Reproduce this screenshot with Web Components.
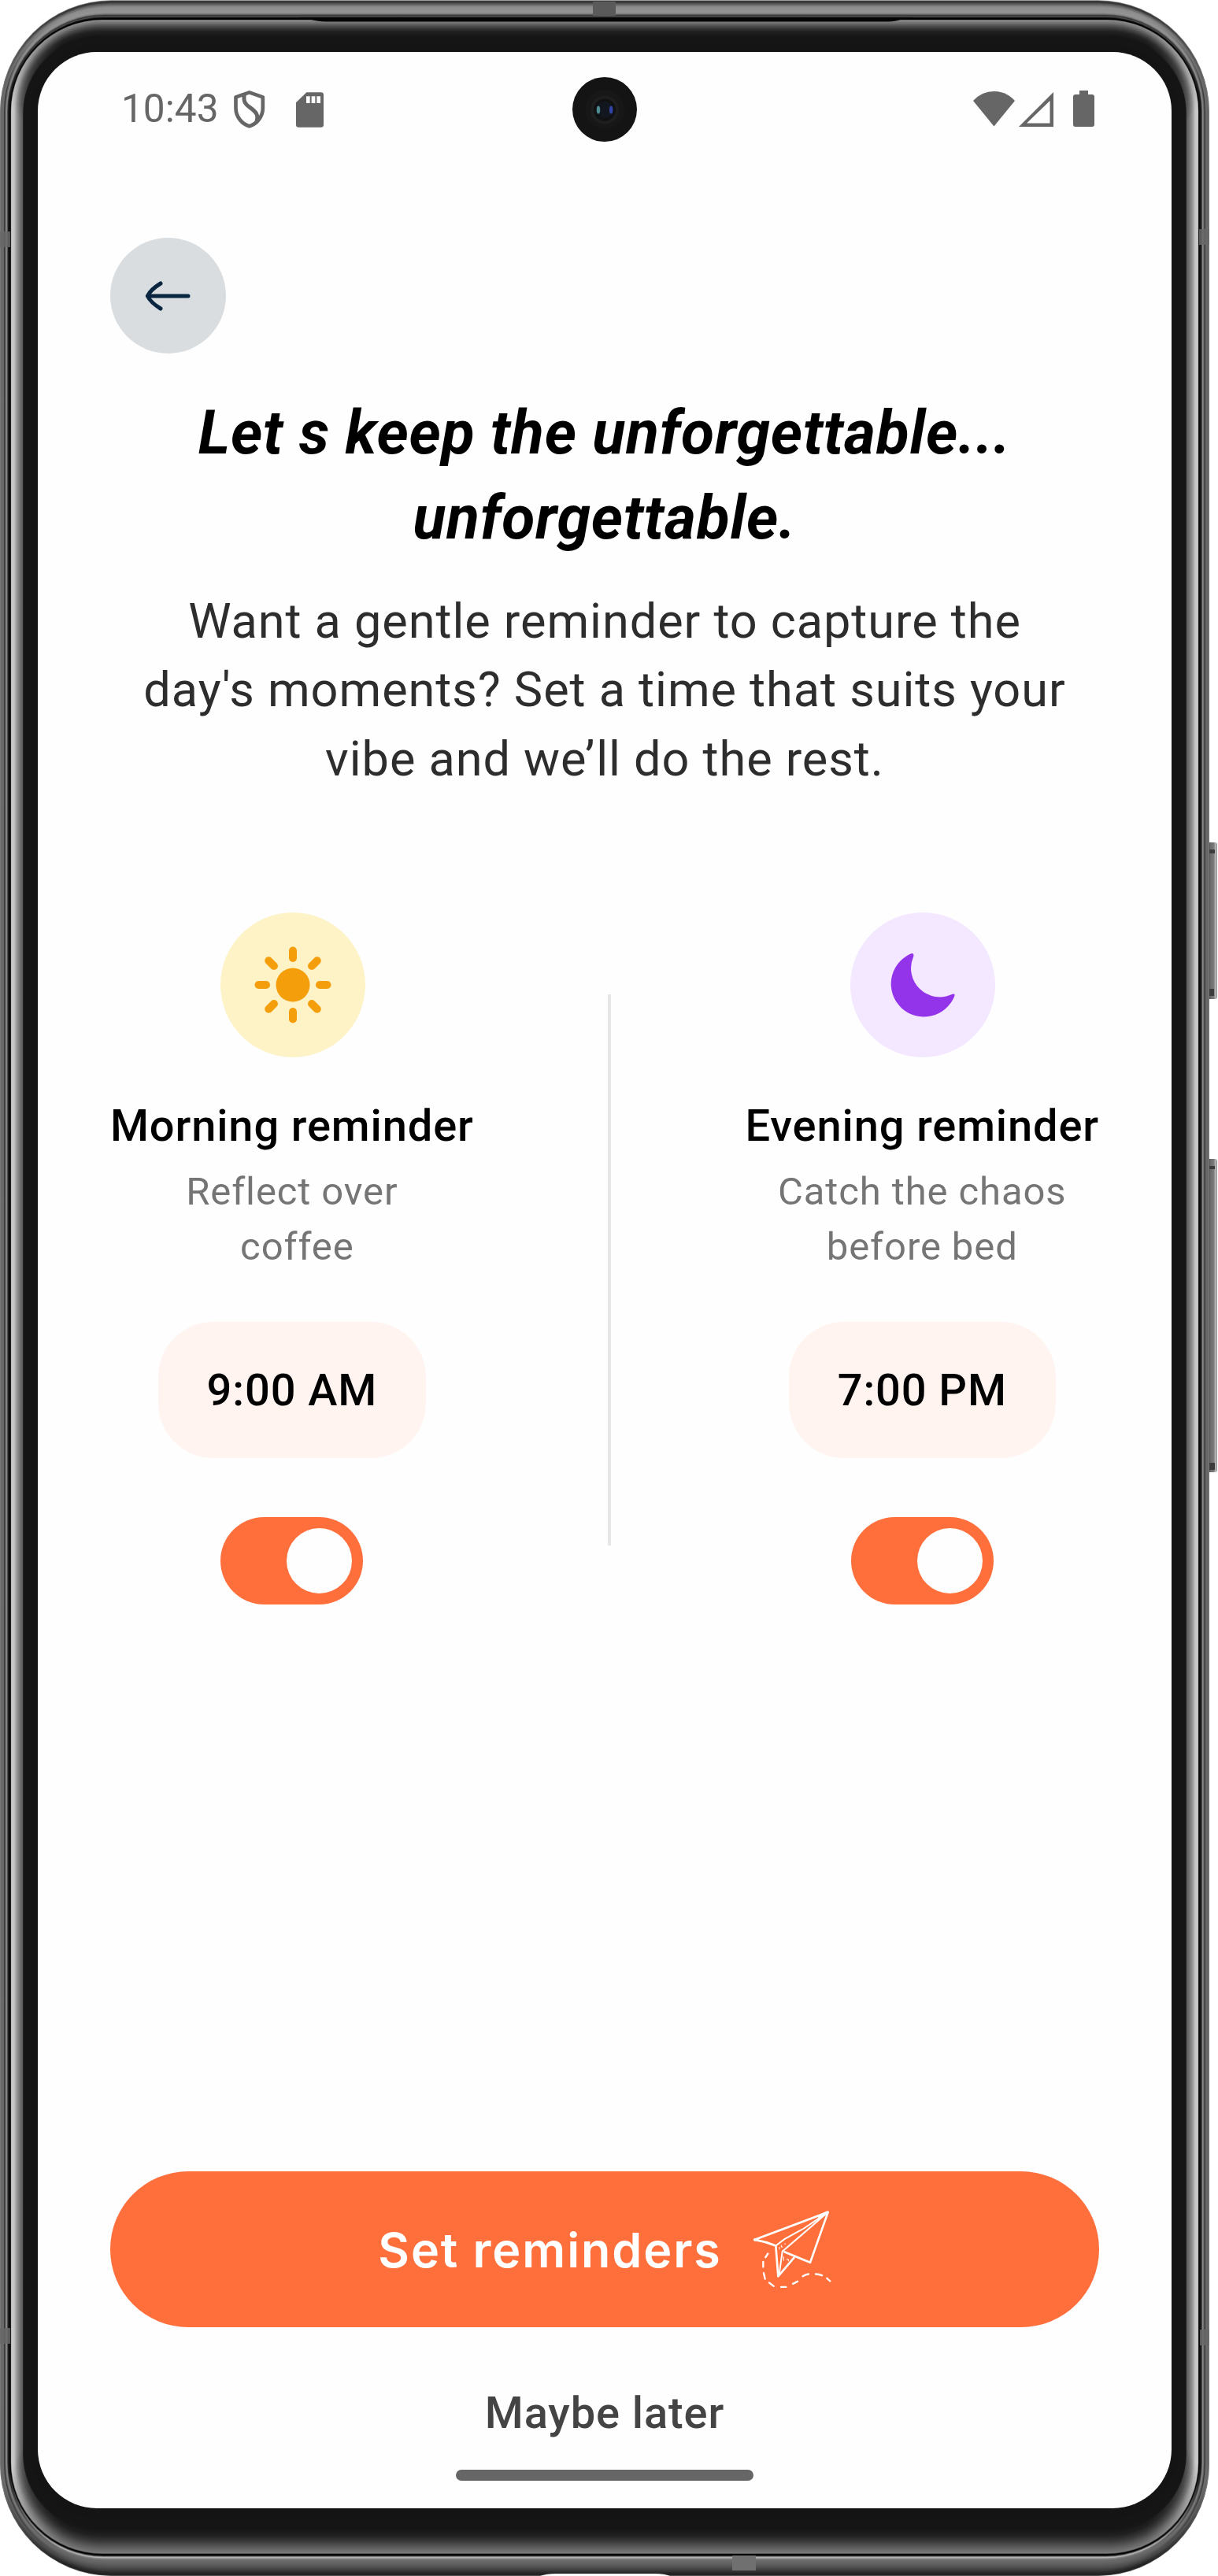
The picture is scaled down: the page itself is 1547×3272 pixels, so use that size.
<!DOCTYPE html>
<html lang="en">
<head>
<meta charset="utf-8">
<title>Reminders</title>
<style>
  html, body { margin: 0; background: #fff; }
  body { width: 1547px; height: 3272px; overflow: hidden; font-family: Roboto, "Noto Sans", sans-serif; }
</style>
</head>
<body>
<phone-frame>
  <status-bar slot="status" time="10:43"></status-bar>
  <reminder-screen></reminder-screen>
</phone-frame>
<script>
class Base extends HTMLElement {
  constructor() {
    super();
    this.attachShadow({ mode: 'open' });
  }
  connectedCallback() { this.shadowRoot.innerHTML = this.render(); }
  attr(n) { return this.getAttribute(n) || ''; }
}

/* Metal body: concentric rings, each with its own top, side and bottom shade. */
const TOP = [[0,'#b4bbb6'],[1.2,'#2e2e2e'],[3,'#3c3c3c'],[5,'#5e5e5e'],[9,'#8e8e8e'],[16,'#939393'],[18,'#6c6c6c'],[19.5,'#2a2a2a'],[20.5,'#5a5a5a'],[22,'#1c1c1c'],[23,'#000'],[24.6,'#000'],[25.2,'#8d8d8d'],[29,'#707070'],[34,'#444'],[39,'#232323'],[46,'#151515'],[66,'#141414']];
const SIDE = [[0,'#808080'],[1.5,'#666'],[4.5,'#6e6e6e'],[5.5,'#2c2c2c'],[6.6,'#5c5c5c'],[8.5,'#909090'],[9.6,'#444'],[10.4,'#1a1a1a'],[13.4,'#040404'],[14.2,'#cfcfcf'],[18,'#c2c2c2'],[21,'#999'],[25,'#747474'],[28.6,'#5c5c5c'],[29.4,'#151515'],[48,'#141414']];
const BOTTOM = [[0,'#666'],[1,'#1d1d1d'],[5,'#2e2e2e'],[9,'#484848'],[15,'#606060'],[20,'#6c6c6c'],[22,'#8a8a8a'],[23,'#c4c4c4'],[24.5,'#7a7a7a'],[25.4,'#111'],[27.6,'#000'],[28.3,'#7a7a7a'],[36,'#5c5c5c'],[43,'#3c3c3c'],[51,'#202020'],[60,'#151515'],[86,'#141414']];
const shade = (stops, d) => {
  const hex = c => c.length === 4 ? parseInt(c[1] + c[1], 16) : parseInt(c.slice(3, 5), 16);
  for (let i = 1; i < stops.length; i++) {
    if (d <= stops[i][0]) {
      const [a, ca] = stops[i - 1], [b, cb] = stops[i];
      const v = Math.round(hex(ca) + (hex(cb) - hex(ca)) * (d - a) / (b - a));
      return `rgb(${v},${v},${v})`;
    }
  }
  return stops[stops.length - 1][1];
};
const lerp = (pts, k) => {
  for (let i = 1; i < pts.length; i++)
    if (k <= pts[i][0]) return pts[i-1][1] + (pts[i][1] - pts[i-1][1]) * (k - pts[i-1][0]) / (pts[i][0] - pts[i-1][0]);
  return pts[pts.length-1][1];
};
customElements.define('phone-body', class extends Base {
  render() {
    const L = [[0,0],[.4,14],[.7,29.5],[1,48]], T = [[0,0],[.4,25],[.7,47],[1,66]], B = [[0,0],[.4,28],[.7,58],[1,86]], R = [[0,142],[.4,116],[.7,97],[1,75]];
    const n = 120;
    let defs = '', rects = '';
    for (let i = 0; i <= n; i++) {
      const k = i / n, l = lerp(L, k), t = lerp(T, k), b = lerp(B, k), r = lerp(R, k);
      const y = t, h = 3272 - t - b;
      const s = shade(SIDE, l);
      const stop = (py, c) => `<stop offset="${((py - y) / h).toFixed(5)}" stop-color="${c}"/>`;
      defs += `<linearGradient id="g${i}" gradientUnits="userSpaceOnUse" x1="0" x2="0" y1="${y}" y2="${y + h}">${stop(y + 12, shade(TOP, t))}${stop(y + 110, s)}${stop(y + h - 110, s)}${stop(y + h - 12, shade(BOTTOM, b))}</linearGradient>`;
      rects += `<rect x="${l}" y="${y}" width="${1536 - 2 * l}" height="${h}" rx="${r}" fill="url(#g${i})"/>`;
    }
    return `<style>:host{display:block}svg{display:block}</style>
    <svg width="1547" height="3272" viewBox="0 0 1547 3272">
      <defs>${defs}
        <linearGradient id="btn" x1="0" x2="1" y1="0" y2="0"><stop offset="0" stop-color="#8a8a8a"/><stop offset=".25" stop-color="#4c4c4c"/><stop offset=".4" stop-color="#6c6c6c"/><stop offset=".7" stop-color="#7c7c7c"/><stop offset=".85" stop-color="#bdbdbd"/><stop offset="1" stop-color="#8a8a8a"/></linearGradient>
      </defs>
      <g fill="url(#btn)">
        <rect x="1532" y="1070" width="14" height="199" rx="3"/>
        <rect x="1532" y="1472" width="14" height="398" rx="3"/>
      </g>
      <g fill="#3c3c3c"><rect x="1536" y="1079" width="7" height="5"/><rect x="1535" y="1256" width="7" height="9"/><rect x="1536" y="1481" width="7" height="4"/><rect x="1535" y="1858" width="8" height="9"/></g>
      ${rects}
      <path d="M380 24 L392 24 Q402 27.4 414 27.4 H1128 Q1138 27.4 1148 23.5 H1160 V22.5 H380Z" fill="#050505"/>
      <g fill="#686868" opacity=".85">
        <rect x="0" y="294" width="13" height="20"/><rect x="1523" y="291" width="13" height="20"/>
        <rect x="0" y="2957" width="13" height="20"/><rect x="1524" y="2959" width="12" height="20"/>
      </g>
      <rect x="753" y="2" width="29" height="18" fill="#5a5a5a"/>
      <rect x="930" y="3246" width="30" height="19" fill="#707070"/>
      <path d="M686 3272 Q694 3269 706 3269 H832 Q844 3269 851 3272Z" fill="#fff"/>
    </svg>`;
  }
});

customElements.define('camera-hole', class extends Base {
  render() {
    return `<style>:host{display:block;width:82px;height:82px}svg{display:block}</style>
    <svg width="82" height="82" viewBox="0 0 82 82">
      <circle cx="41" cy="41" r="41" fill="#141414"/>
      <circle cx="41" cy="41" r="25" fill="#171717"/>
      <circle cx="41" cy="41.500" r="18" fill="#1e1e1e"/>
      <circle cx="41" cy="41.500" r="14" fill="#101112"/>
      <circle cx="41" cy="41.500" r="10.500" fill="#12161e"/>
      <ellipse cx="33" cy="41.500" rx="2.200" ry="5" fill="#4c8d93"/>
      <ellipse cx="49.200" cy="41.500" rx="2.200" ry="5" fill="#3346a8"/>
    </svg>`;
  }
});

customElements.define('phone-frame', class extends Base {
  render() {
    return `<style>
      :host{display:block;position:relative;width:1547px;height:3272px}
      phone-body{position:absolute;inset:0}
      .screen{position:relative;box-sizing:border-box;width:1440px;height:3120px;border-radius:75px;background:#fefefe;display:flex;flex-direction:column;overflow:hidden}
      .wrap{padding:66px 0 0 48px}
      camera-hole{position:absolute;left:679px;top:32px}
    </style>
    <phone-body></phone-body>
    <div class="wrap"><div class="screen"><slot name="status"></slot><slot></slot><camera-hole></camera-hole></div></div>`;
  }
});

customElements.define('status-bar', class extends Base {
  render() {
    return `<style>
      :host{display:flex;justify-content:space-between;align-items:flex-start;box-sizing:border-box;height:140px;padding:44px 97px 0 106px;color:#666}
      .side{display:flex;align-items:center;height:56px}
      span{font-size:49.600px;line-height:56px}
      svg{display:block;fill:currentColor}
      .shield{margin:2px 0 0 18.500px}.sd{margin:2.400px 0 0 38px}
    </style>
    <div class="side"><span>${this.attr('time')}</span>
      <svg class="shield" width="42" height="50" viewBox="888 342 126 150"><g fill="none" stroke="currentColor" stroke-width="14" stroke-linejoin="round"><path d="M950 352 L1001.500 370 V412 C1001.500 446 978 472 950 481 C922 472 898.500 446 898.500 412 V370Z"/><path stroke-width="15" d="M931 360 C926 388 936 398 953 410 C978 428 986 440 977 466"/></g></svg>
      <svg class="sd" width="35" height="45" viewBox="1128 350 105 135"><path fill-rule="evenodd" d="M1168 351 H1223 Q1233 351 1233 361 V475 Q1233 484 1223 484 H1138 Q1128 484 1128 475 V390Z M1167 366 V392 H1181 V366Z M1187 366 V392 H1201 V366Z M1207 366 V392 H1221 V366Z"/></svg>
    </div>
    <div class="side">
      <svg width="155" height="50" viewBox="1236 113 155 50"><path d="M1262.500 160.500 L1236 128 Q1247 116 1262.500 116 Q1278 116 1289 128Z"/><path fill-rule="evenodd" d="M1294 161 L1338 117 V161Z M1304 156.500 H1333.500 V128Z"/><path d="M1371 115 H1382 V120 H1387 Q1390 120 1390 123 V158 Q1390 161 1387 161 H1366 Q1363 161 1363 158 V123 Q1363 120 1366 120 H1371Z"/></svg>
    </div>`;
  }
});

customElements.define('back-button', class extends Base {
  render() {
    return `<style>:host{display:flex;align-items:center;justify-content:center;width:147px;height:147px;border-radius:50%;background:#d9dde0}svg{display:block}</style>
    <svg width="60" height="42" viewBox="184.500 354.500 60 42" fill="none" stroke="#0a2540" stroke-width="5" stroke-linecap="round" stroke-linejoin="round"><path d="M239.500 375.500 H188 M204.500 359.500 C198 363.500 191 369 187.800 375.500 C191 382 198 387.500 204.500 391.500"/></svg>`;
  }
});

customElements.define('toggle-switch', class extends Base {
  render() {
    return `<style>:host{display:flex;justify-content:flex-end;align-items:center;box-sizing:border-box;width:181px;height:111px;padding-right:14px;border-radius:56px;background:#ff6f3c}i{width:83px;height:83px;border-radius:50%;background:#fefefe}</style><i></i>`;
  }
});

const ICONS = {
  sun: `<g fill="#f59e0b" stroke="#f59e0b" stroke-linecap="round"><circle r="21.500" stroke="none"/>${[0,45,90,135,180,225,270,315].map(a => `<path stroke-width="10" d="M0 -34V-43.500" transform="rotate(${a})"/>`).join('')}</g>`,
  moon: `<path transform="translate(-1172.500 -1251.500)" fill="#9333ea" d="M1156 1212.500 A41.800 41.800 0 1 0 1212.700 1266 Q1214 1262 1210 1263.200 A36.500 36.500 0 0 1 1160.700 1215.500 Q1162 1209.500 1156 1212.500Z"/>`
};
customElements.define('reminder-card', class extends Base {
  render() {
    return `<style>
      :host{display:flex;flex-direction:column;align-items:center}
      .badge{width:184px;height:184px;margin-left:2px;border-radius:50%;background:${this.attr('tint')}}
      .badge svg{display:block}
      h2{margin:54px 0 0;font-size:56px;font-weight:500;line-height:66px;letter-spacing:.875px;color:#000;white-space:nowrap}
      p{margin:16px 0 0;font-size:49px;line-height:70px;letter-spacing:.9px;color:#757575;text-align:center}
      .time{margin-top:60px;height:173px;box-sizing:border-box;padding:1px 61.700px 0;border-radius:70px;background:#fff4f0;font-size:56px;font-weight:500;line-height:173px;color:#000;letter-spacing:.9px}
      toggle-switch{margin-top:75px}
    </style>
    <div class="badge"><svg width="184" height="184" viewBox="-92 -92 184 184">${ICONS[this.attr('icon')]}</svg></div>
    <h2>${this.attr('heading')}</h2><p><slot></slot></p>
    <div class="time">${this.attr('time')}</div><toggle-switch></toggle-switch>`;
  }
});

customElements.define('primary-button', class extends Base {
  render() {
    return `<style>
      :host{display:flex;align-items:center;justify-content:center;gap:37px;height:198px;box-sizing:border-box;padding-left:3px;border-radius:99px;background:#ff6f3c;color:#fff}
      span{font:600 61px/90px Inter,sans-serif;letter-spacing:1.900px;padding-top:1px}
      svg{display:block}
    </style>
    <span><slot></slot></span>
    <svg width="105" height="105" viewBox="99 73.500 315 315" fill="none" stroke="#fff" stroke-width="8" stroke-linejoin="round" stroke-linecap="round">
      <path d="M113 193 L392 88 L324 280 L227 240 M113 193 Q155 200 193 216 L202 333 L262 262"/>
      <path stroke-width="6" d="M193 216 L226 191 L300 150 L392 88 M392 88 L218 238 L206 325"/>
      <path stroke-width="11" d="M113 193H122 M358 104L388 90"/>
      <path stroke-width="3" d="M207 222v7 M214 214v7h5 M227 209h3 M223 258v14 M234 269q3 -5 7 -2v7"/>
      <path stroke-width="7" d="M163 246L154 260 M145 277V297 M147 320L152 342 M168 357L185 370 M213 373L232 373 M258 361L276 352 M296 332Q307 325 318 324 M345 324Q358 324 369 329 M388 340L400 351"/>
    </svg>`;
  }
});

customElements.define('reminder-screen', class extends Base {
  render() {
    return `<style>
      :host{flex:1;display:flex;flex-direction:column;padding:96px 92px 35px}
      h1{margin:46.700px 0 0;font-size:77px;line-height:108px;font-weight:700;font-style:italic;text-align:center;color:#000;letter-spacing:.75px}
      .lead{margin:34.300px 0 0;font-size:61.250px;line-height:87.500px;text-align:center;color:#2d2d2d;letter-spacing:.94px;white-space:nowrap}
      .row{display:flex;justify-content:space-between;margin-top:150.500px}
      .divider{width:3.500px;height:700px;margin-top:104px;background:#e6e6e6}
      .grow{flex:1}
      .later{margin-top:76px;text-align:center;font-size:56px;line-height:66px;font-weight:500;color:#444;letter-spacing:.9px}
      .home{align-self:center;width:378px;height:14px;border-radius:7px;background:#666;margin-top:39px}
    </style>
    <back-button></back-button>
    <h1>Let s keep the unforgettable...<br>unforgettable.</h1>
    <p class="lead">Want a gentle reminder to capture the<br>day's moments? Set a time that suits your<br>vibe and we’ll do the rest.</p>
    <div class="row">
      <reminder-card icon="sun" tint="#fef3c7" heading="Morning reminder" time="9:00 AM">Reflect over<br>&nbsp;coffee</reminder-card>
      <div class="divider"></div>
      <reminder-card icon="moon" tint="#f3e8ff" heading="Evening reminder" time="7:00 PM">Catch the chaos<br>before bed</reminder-card>
    </div>
    <div class="grow"></div>
    <primary-button>Set reminders</primary-button>
    <div class="later">Maybe later</div>
    <div class="home"></div>`;
  }
});
</script>
</body>
</html>
